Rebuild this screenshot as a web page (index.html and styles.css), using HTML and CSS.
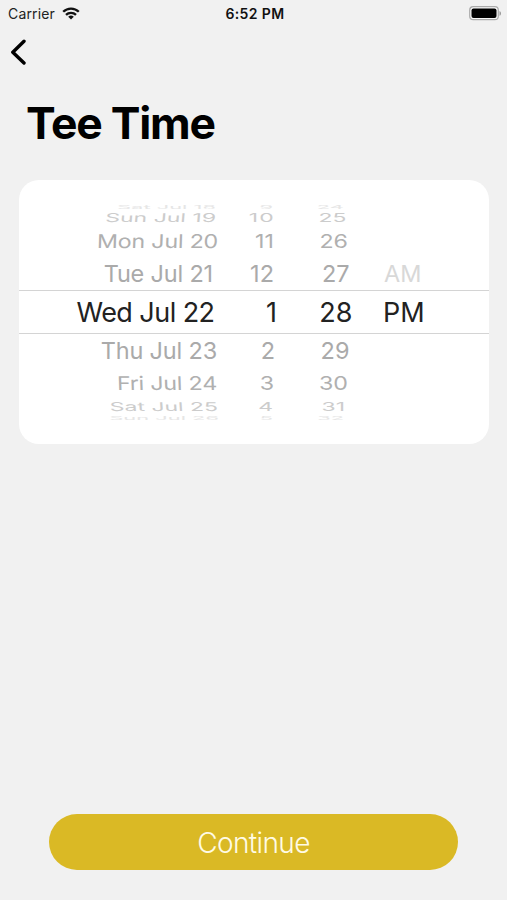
FILE: index.html
```html
<!DOCTYPE html>
<html lang="en">
<head>
<meta charset="utf-8">
<title>Tee Time</title>
<link rel="stylesheet" href="styles.css">
</head>
<body>
<header class="status">
  <div class="carrier"><span>Carrier</span>
    <svg width="18" height="13" viewBox="0 0 18 13" fill="none" stroke="#111" stroke-width="2.3"><path d="M1.2 4.8a11 11 0 0 1 15.6 0M4 7.9a7 7 0 0 1 10 0"/><path d="M9 12.5 6.2 9.8a4 4 0 0 1 5.6 0z" fill="#111" stroke="none"/></svg>
  </div>
  <time>6:52 PM</time>
  <svg class="battery" width="33" height="15" viewBox="0 0 33 15"><rect x=".7" y=".7" width="28.6" height="13" rx="3.5" fill="#f7f7f7" stroke="#aaa" stroke-width="1.2"/><rect x="2.5" y="2.5" width="25" height="9.5" rx="2" fill="#000"/><path d="M30.5 5c2 .8 2 4 0 4.8z" fill="#999"/></svg>
</header>
<nav class="nav"><svg width="17" height="27" viewBox="0 0 17 27" fill="none" stroke="#000" stroke-width="3.4" stroke-linecap="round" stroke-linejoin="round"><path d="M14 2.2 2.8 13.2 14 24"/></svg></nav>
<h1>Tee Time</h1>
<main class="picker">
  <div class="row peek top"><span class="date">Sat Jul 18</span><span class="hour">9</span><span class="minute">24</span><span class="period"></span></div>
  <div class="row far up"><span class="date">Sun Jul 19</span><span class="hour">10</span><span class="minute">25</span><span class="period"></span></div>
  <div class="row mid up"><span class="date">Mon Jul 20</span><span class="hour">11</span><span class="minute">26</span><span class="period"></span></div>
  <div class="row near up"><span class="date">Tue Jul 21</span><span class="hour">12</span><span class="minute">27</span><span class="period faint">AM</span></div>
  <div class="row selected"><span class="date">Wed Jul 22</span><span class="hour">1</span><span class="minute">28</span><span class="period">PM</span></div>
  <div class="row near down"><span class="date">Thu Jul 23</span><span class="hour">2</span><span class="minute">29</span><span class="period"></span></div>
  <div class="row mid down"><span class="date">Fri Jul 24</span><span class="hour">3</span><span class="minute">30</span><span class="period"></span></div>
  <div class="row far down"><span class="date">Sat Jul 25</span><span class="hour">4</span><span class="minute">31</span><span class="period"></span></div>
  <div class="row peek bottom"><span class="date">Sun Jul 26</span><span class="hour">5</span><span class="minute">32</span><span class="period"></span></div>
</main>
<button class="continue">Continue</button>
</body>
</html>
```
FILE: styles.css
```css
* { box-sizing: border-box; }
body { margin: 0; height: 900px; background: #f1f1f1; font-family: Inter, "Liberation Sans", sans-serif; display: flex; flex-direction: column; overflow: hidden; }
.status { height: 28px; flex: none; display: grid; grid-template-columns: 1fr auto 1fr; align-items: center; padding: 0 5px 2px 8px; font-size: 14px; color: #222; }
.carrier { display: flex; align-items: center; gap: 7px; letter-spacing: .15px; }
.status time { font-weight: 600; letter-spacing: .4px; color: #111; }
.battery { justify-self: end; }
.nav { height: 50px; flex: none; padding: 11px 0 0 10px; }
h1 { margin: 0 0 0 26px; height: 102px; flex: none; font-size: 44.5px; line-height: 90px; font-weight: 700; letter-spacing: -1.25px; color: #000; }
.picker { flex: none; width: 470px; height: 264px; margin-left: 19px; padding-top: 23px; border-radius: 20px; background: #fff; }
.row { --dx: 0px; --hx: 0px; --mx: 0px; --px: 0px; --dy: 0px; --skew: 0deg; --scale: 1, 1; display: grid; grid-template-columns: 197px 58px 78px 1fr; align-items: center; line-height: 42px; font-size: 27px; color: #aaa; white-space: nowrap; }
.row span { display: block; height: 42px; margin: -20px 0; }
.row .date { text-align: right; transform-origin: right center; transform: translate(var(--dx), var(--dy)) skewX(var(--skew)) scale(var(--scale)); }
.row .hour { text-align: right; transform-origin: right center; transform: translate(var(--hx), var(--dy)) scale(var(--scale)); }
.row .minute { text-align: right; transform-origin: right center; transform: translate(var(--mx), var(--dy)) scale(var(--scale)); }
.row .period { padding-left: 31px; transform-origin: left center; transform: translate(var(--px), var(--dy)) scale(var(--scale)); }
.selected { --dx: -1.5px; --hx: 3px; --mx: .5px; --dy: 1px; height: 44px; border-top: 1px solid #d4d4d4; border-bottom: 1px solid #d4d4d4; color: #222; }
.selected .date { letter-spacing: -.55px; }
.near { --scale: .87, .86; --mx: -2.5px; --px: 5px; height: 33px; }
.near .date { letter-spacing: -.2px; }
.near.up { --dx: -3px; --hx: 0px; --skew: 0deg; }
.near.down { --dx: 1px; --hx: 1px; --skew: 0deg; }
.mid { --scale: .86, .7; --mx: -4px; --dy: .8px; height: 32px; color: #b0b0b0; }
.mid .date { letter-spacing: -.25px; }
.mid.up { --dx: 2px; --skew: -2deg; }
.mid.down { --dx: 1px; --skew: 2deg; }
.far { --scale: .85, .45; --hx: -1px; --mx: -5.5px; height: 15px; color: #ccc; }
.far.up { --dx: 0px; --skew: -5deg; }
.far.up .hour { --hx: 1px; letter-spacing: 1.5px; }
.far.down { --dx: 2px; --mx: -7px; --skew: 4deg; }
.peek { --scale: .81, .2; --hx: -1px; --mx: -8px; height: 7px; color: #e6e6e6; overflow: hidden; }
.peek.top { --dy: 0px; }
.peek.bottom { --dx: 3px; }
.row .faint { color: #d8d8d8; }
.continue { width: 409px; height: 56px; margin: auto 0 30px 49px; border: 0; border-radius: 28px; background: #dab925; color: #fffbe5; font: 300 28px/56px Inter, sans-serif; letter-spacing: -.6px; padding: 1px 0 0; }
```
